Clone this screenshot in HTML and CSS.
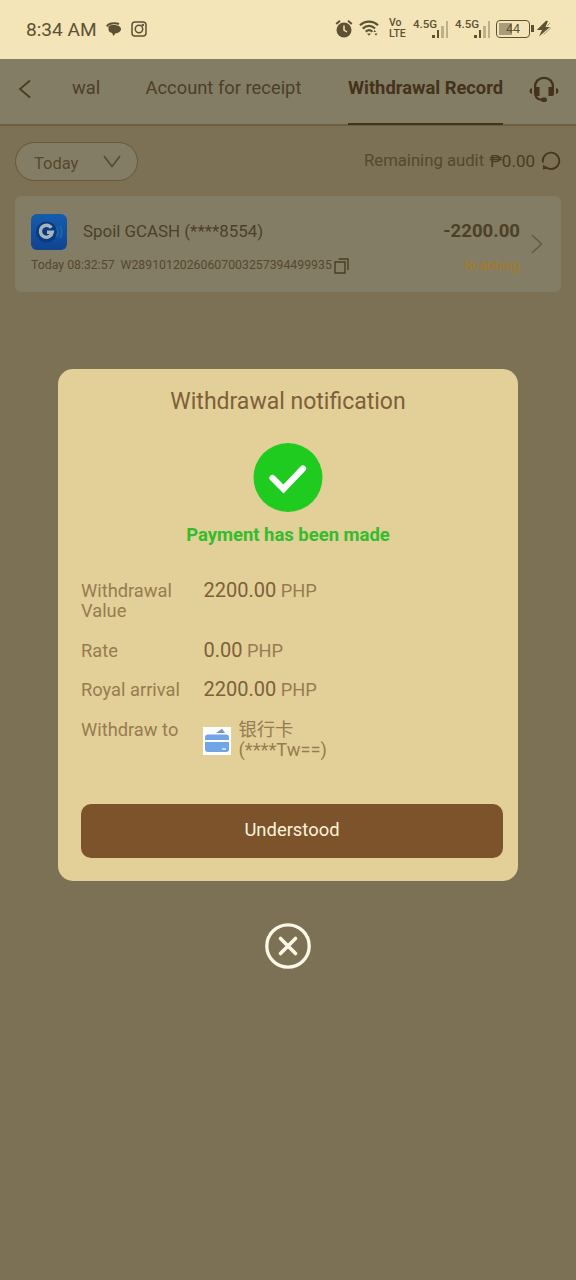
FILE: index.html
```html
<!DOCTYPE html>
<html lang="en">
<head>
<meta charset="utf-8">
<title>Withdrawal Record</title>
<link rel="stylesheet" href="styles.css">
</head>
<body>
<div class="screen">
  <header class="status">
    <span class="clock">8:34 AM</span>
    <svg class="chat" width="16" height="16" viewBox="0 0 16 16"><path d="M2.500 5C5 3.500 14 3 15 7.500C15.500 10.500 12 12.300 9.500 12.300L7.500 15L6 12C3 11.500 2.200 9.500 2.500 7Z" fill="#5c5133"/><path d="M1 5.500C1.500 2.500 9 1.500 13 3" fill="none" stroke="#5c5133" stroke-width="2"/></svg>
    <svg class="insta" width="16" height="16" viewBox="0 0 16 16" fill="none" stroke="#5c5133" stroke-width="1.500"><rect x="1" y="1" width="14" height="14" rx="3"/><circle cx="8" cy="8" r="3.700"/><circle cx="11.800" cy="4" r=".5"/></svg>
    <div class="signals">
      <svg class="alarm" width="18" height="19" viewBox="0 0 18 19"><circle cx="9" cy="11" r="7.500" fill="#5c5133"/><path d="M1.200 5L5 1.700M16.800 5L13 1.700" stroke="#5c5133" stroke-width="2"/><path d="M9 6.500V11L12 13" fill="none" stroke="#f3e5b8" stroke-width="1.500"/></svg>
      <svg class="wifi" width="20" height="17" viewBox="0 0 20 17"><path d="M1 5.300C6 .3 14 .3 19 5.300M3.800 8.600C7.500 5 12.500 5 16 8.600M6.700 11.700C9 9.700 11.500 9.700 13.300 11.700" fill="none" stroke="#5c5133" stroke-width="2.200"/><path d="M8 13.500H12L10 15.800ZM14.300 12L15.700 10L17 12ZM15.500 13.500H18.500L17 15.800Z" fill="#5c5133"/></svg>
      <div class="volte"><span>Vo</span><span>LTE</span></div>
      <div class="cell"><span>4.5G</span><i class="b1"></i><i class="b2"></i><i class="b3"></i><i class="b4"></i></div>
      <div class="cell second"><span>4.5G</span><i class="b1"></i><i class="b2"></i><i class="b3"></i><i class="b4"></i></div>
      <div class="battery">44</div><i class="nub"></i>
      <svg class="bolt" width="15" height="17" viewBox="0 0 15 17"><path d="M10 .8L.8 10H6L3 16.500L14 7H9.500L12 1Z" fill="#5c5133"/><path d="M14 3L11 6M14.800 8L7.500 14.500" fill="none" stroke="#a79a73"/></svg>
    </div>
  </header>
  <nav class="tabs">
    <svg class="back" width="14" height="20" viewBox="0 0 14 20"><path d="M12 1.500L2 10L12 18.500" fill="none" stroke="#4b3d21" stroke-width="1.800"/></svg>
    <span class="tab cut">wal</span>
    <span class="tab account">Account for receipt</span>
    <span class="tab active">Withdrawal Record</span>
    <svg class="headset" width="30" height="27" viewBox="0 0 30 27"><path d="M6 12C5 -1.500 25 -1.500 24 12M6.500 19C7 23 11 24 14 23.500" fill="none" stroke="#44321a" stroke-width="2.200"/><path d="M5 11H10.500V20H7Q5 20 5 18ZM19.500 11H25V18Q25 20 23 20H19.500ZM3 12V18Q.5 17.500 .5 15T3 12ZM27 12V18Q29.500 17.500 29.500 15T27 12Z" fill="#44321a"/><rect x="12" y="21.500" width="6" height="4.500" rx="2" fill="#44321a"/></svg>
  </nav>
  <main>
    <div class="filter">
      <div class="period"><span>Today</span><svg width="18" height="13" viewBox="0 0 18 13"><path d="M1 1L9 11.500L17 1" fill="none" stroke="#55482d" stroke-width="1.600"/></svg></div>
      <div class="audit"><span>Remaining audit</span><b>₱0.00</b></div>
      <svg class="refresh" width="20" height="20" viewBox="0 0 20 20"><path d="M2 11.500A8.200 8.200 0 1 1 5 16.300" fill="none" stroke="#49371c" stroke-width="1.900"/><path d="M1.800 18.500L2.200 13.800L7.500 17.200Z" fill="#49371c"/></svg>
    </div>
    <section class="record">
      <svg class="gcash" width="36" height="36" viewBox="0 0 36 36"><defs><linearGradient id="g" x2="0" y2="1"><stop stop-color="#145dac"/><stop offset="1" stop-color="#104391"/></linearGradient></defs><rect width="36" height="36" rx="6" fill="url(#g)"/><circle cx="15.500" cy="18" r="10.500" fill="#083b81"/><path d="M20.300 13.800A6 6 0 1 0 21.300 18.300H16" fill="none" stroke="#a7b5bd" stroke-width="3.400"/><path d="M25.500 13Q28.500 18 25.500 23M29 12Q32.500 18 29 24" fill="none" stroke="#1c66aa" stroke-width="2"/></svg>
      <span class="method">Spoil GCASH (****8554)</span>
      <span class="amount">-2200.00</span>
      <div class="order"><span class="time">Today 08:32:57</span><span class="number">W28910120260607003257394499935</span><svg width="15" height="16" viewBox="0 0 15 16"><path d="M1 4H11V15H1ZM4.500 1H14V12" fill="none" stroke="#4b3c20" stroke-width="1.400"/></svg></div>
      <span class="state">Scabbing</span>
      <svg class="next" width="12" height="20" viewBox="0 0 12 20"><path d="M1 1L10.500 10L1 19" fill="none" stroke="#65583b" stroke-width="1.500"/></svg>
    </section>
  </main>
  <div class="overlay">
    <section class="dialog">
      <h1><span>Withdrawal notification</span></h1>
      <svg class="check" width="70" height="70" viewBox="0 0 70 70"><circle cx="35" cy="34.500" r="34.500" fill="#20cb20"/><path d="M19.500 35L30.500 46L50 25.500" fill="none" stroke="#fff" stroke-width="6.200" stroke-linecap="round"/></svg>
      <p class="success"><span>Payment has been made</span></p>
      <dl>
        <dt>Withdrawal Value</dt><dd><b>2200.00</b> PHP</dd>
        <dt>Rate</dt><dd><b>0.00</b> PHP</dd>
        <dt>Royal arrival</dt><dd><b>2200.00</b> PHP</dd>
        <dt>Withdraw to</dt><dd class="bank"><svg width="28" height="28" viewBox="0 0 28 28"><path d="M0 0H28V28H0Z" fill="#fff"/><path d="M13 6L19 1.800L22 6Z" fill="#7694bd"/><path d="M2 13V10.500Q2 7.500 5 7.500H23Q26 7.500 26 10.500V13ZM2 15H26V22.500Q26 25 23 25H5Q2 25 2 22.500Z" fill="#72a4e8"/><path d="M19 22H23" stroke="#e0efff" stroke-width="1.500"/></svg><span>银行卡<br>(****Tw==)</span></dd>
      </dl>
      <button>Understood</button>
    </section>
    <svg class="close" width="46" height="46" viewBox="0 0 46 46" fill="none" stroke="#fff8e9"><circle cx="23" cy="23" r="21.200" stroke-width="3.300"/><path d="M15.500 15.500L30.500 30.500M30.500 15.500L15.500 30.500" stroke-width="3.600" stroke-linecap="round"/></svg>
  </div>
</div>
</body>
</html>
```

FILE: styles.css
```css
* { box-sizing: border-box; }
body { margin: 0; font-family: Roboto, "Noto Sans CJK SC", sans-serif; background: #7c7154; }
svg { display: block; flex: none; }
.screen { position: relative; width: 576px; height: 1280px; overflow: hidden; white-space: nowrap; }
.status { height: 59px; display: flex; align-items: center; background: #f3e5b8; color: #5c5133; padding-left: 26px; }
.clock { width: 80px; font-size: 19.1px; }
.insta { margin: -2px 0 0 9px; }
.chat { margin-top: -2px; }
.signals { display: flex; align-items: center; margin: -2px 0 0 188px; }
.wifi { margin-left: 6px; }
.volte { display: flex; flex-direction: column; gap: 1px; width: 24px; margin-left: 10px; font: 500 10.5px/10px Roboto, sans-serif; }
.volte span { height: 10px; }
.cell { display: flex; align-items: flex-end; width: 36px; height: 18px; gap: 2px; }
.cell span { width: 23px; margin-right: -6px; align-self: flex-start; font: 500 11.5px/12px Roboto, sans-serif; margin-top: -2px; }
.cell i { width: 2.5px; flex: none; background: #5c5133; }
.cell .b1 { height: 3px; }
.cell .b2 { height: 8px; }
.cell .b3 { height: 12px; opacity: .35; }
.cell .b4 { height: 17px; opacity: .35; }
.second { margin-left: 6px; }
.battery { width: 34px; height: 18px; margin-left: 5px; border: 1.5px solid #5c5133; border-radius: 4px; text-align: center; font-size: 12.5px; line-height: 16px; background: linear-gradient(90deg, #a79d79 13px, transparent 13px) 2px 2px / 29px 12px no-repeat; }
.nub { width: 3px; height: 7px; background: #5c5133; margin-left: 1px; }
.bolt { margin-left: 2px; }
.tabs { height: 67px; display: flex; padding-left: 18px; background: #847d66; border-bottom: 2px solid #6c6044; color: #4c4027; font-size: 18.35px; line-height: 22px; }
.back { margin-top: 20px; }
.tab { height: 66px; padding-top: 18px; }
.cut { width: 74px; padding-left: 40px; }
.account { width: 202px; padding-left: 39.5px; }
.active { width: 155px; margin-left: 40px; border-bottom: 2px solid #44321a; color: #44321a; font-weight: 700; }
.headset { margin: 17px 0 0 26px; }
main { padding: 16px 15px 0; }
.filter { height: 39px; display: flex; color: #55482d; }
.period { width: 123px; height: 39px; display: flex; align-items: center; gap: 25px; padding-left: 18px; padding-top: 1px; border: 1.5px solid #6b5635; border-radius: 20px; background: #847d66; font-size: 16.5px; }
.period span { width: 44px; padding-top: 2px; }
.period svg { margin-top: -2px; }
.audit { display: flex; width: 171px; margin-left: 226px; padding-top: 9px; font-size: 16.7px; line-height: 20px; justify-content: space-between; }
.audit b { font-weight: 400; font-size: 17px; color: #4b3b20; }
.refresh { margin: 9px 0 0 6px; }
.record { display: grid; grid-template-columns: 52px 1fr auto 26px; grid-template-rows: 36px 22px; row-gap: 4px; height: 96px; margin: 15px 0 0; padding: 18px 15px 0 16px; width: 546px; background: #847d66; border-radius: 6px; color: #4c4027; }
.method { font-size: 16.9px; line-height: 34px; }
.amount { font-size: 18.6px; line-height: 35px; font-weight: 700; text-align: right; }
.next { grid-column: 4; grid-row: 1 / 3; align-self: center; justify-self: end; margin: -3px 3px 0 0; }
.order { grid-row: 2; grid-column: 1 / 3; display: flex; align-items: center; font-size: 12.3px; color: #55482d; }
.time { width: 89.5px; }
.number { width: 213.5px; }
.order svg { margin-top: 1px; }
.state { grid-row: 2; grid-column: 3; text-align: right; font-size: 13.6px; line-height: 23px; color: #a67b20; }
.overlay { position: absolute; inset: 0; display: flex; flex-direction: column; align-items: center; padding-top: 369px; }
.dialog { width: 460px; height: 512px; padding: 18px 15px 0 23px; background: #e3cf98; border-radius: 15px; color: #967c50; }
h1 { margin: 0 8px 0 0; text-align: center; font-size: 23px; line-height: 29px; font-weight: 400; color: #7e6038; }
.check { margin: 27px 0 0 172px; }
.success { margin: 10px 8px 0 0; text-align: center; color: #33bd2d; font-size: 18.45px; line-height: 24px; font-weight: 700; }
dl { margin: 34px 0 0; display: grid; grid-template-columns: 100px 1fr; column-gap: 22.5px; grid-template-rows: 40px 20px 20px 40px; row-gap: 19.7px; font-size: 18.3px; line-height: 20px; }
dt { white-space: normal; }
dd { margin: 0; line-height: 19px; }
dd b { font-weight: 400; font-size: 20px; color: #7e6038; }
.bank { display: flex; gap: 8px; }
.bank svg { margin-top: 7px; margin-left: -1px; }
.bank span { line-height: 20px; }
button { display: block; width: 422px; height: 54px; margin-top: 44px; padding: 0 0 3px; border: 0; border-radius: 10px; background: #7c532a; color: #fff4dc; font: 18.4px Roboto, sans-serif; }
.close { margin-top: 42px; }
```
